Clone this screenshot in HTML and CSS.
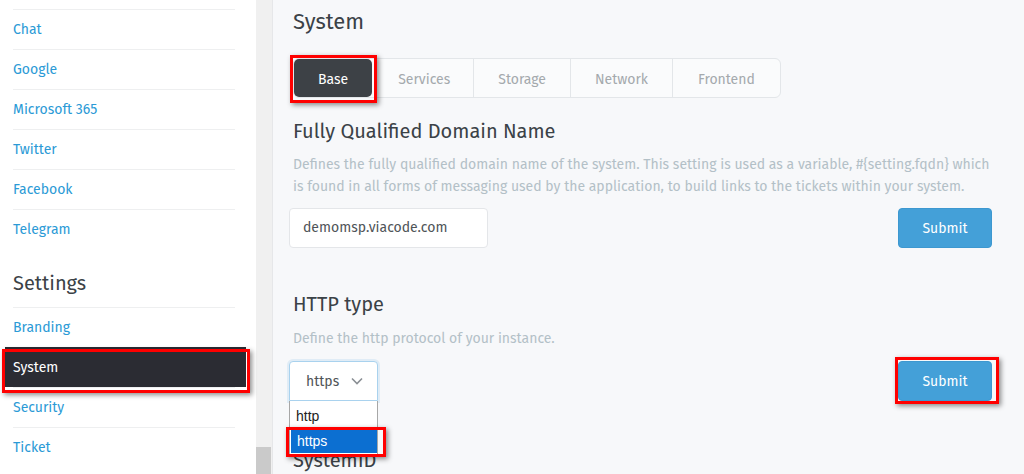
FILE: index.html
```html
<!DOCTYPE html>
<html lang="en">
<head>
<meta charset="utf-8">
<title>System</title>
<link rel="stylesheet" href="styles.css">
</head>
<body>
<div class="app">
  <aside class="sidebar">
    <nav class="nav">
      <a class="nav-item">Chat</a>
      <a class="nav-item">Google</a>
      <a class="nav-item">Microsoft 365</a>
      <a class="nav-item">Twitter</a>
      <a class="nav-item">Facebook</a>
      <a class="nav-item">Telegram</a>
      <h2 class="nav-title">Settings</h2>
      <a class="nav-item">Branding</a>
      <a class="nav-item is-active mark mark-nav">System</a>
      <a class="nav-item">Security</a>
      <a class="nav-item">Ticket</a>
    </nav>
  </aside>
  <div class="scrollbar"><div class="scrollbar-thumb"></div></div>
  <main class="content">
    <h1 class="page-title">System</h1>
    <div class="tabs">
      <span class="tab is-active mark mark-tab">Base</span>
      <span class="tab">Services</span>
      <span class="tab">Storage</span>
      <span class="tab">Network</span>
      <span class="tab">Frontend</span>
    </div>

    <section class="setting setting-fqdn">
      <h2 class="setting-title">Fully Qualified Domain Name</h2>
      <p class="setting-desc">Defines the fully qualified domain name of the system. This setting is used as a variable, #{setting.fqdn} which is found in all forms of messaging used by the application, to build links to the tickets within your system.</p>
      <div class="setting-row">
        <div class="input">demomsp.viacode.com</div>
        <button class="btn">Submit</button>
      </div>
    </section>

    <section class="setting setting-http">
      <h2 class="setting-title">HTTP type</h2>
      <p class="setting-desc">Define the http protocol of your instance.</p>
      <div class="setting-row">
        <div class="select-wrap">
          <div class="select">
            <span>https</span>
            <svg class="chevron" width="12" height="8" viewBox="0 0 12 8"><path d="M1 1.5 L6 6.5 L11 1.5" fill="none" stroke="#8a8f94" stroke-width="1.6"/></svg>
          </div>
          <ul class="dropdown">
            <li class="option">http</li>
            <li class="option is-selected mark mark-option">https</li>
          </ul>
        </div>
        <button class="btn mark mark-btn">Submit</button>
      </div>
    </section>

    <section class="setting setting-last">
      <h2 class="setting-title">SystemID</h2>
    </section>
  </main>
</div>
</body>
</html>
```

FILE: styles.css
```css
* { box-sizing: border-box; }

html, body {
  margin: 0;
  height: 474px;
  overflow: hidden;
}

body {
  font-family: "Fira Sans", "Open Sans", "Noto Sans", sans-serif;
  font-size: 14px;
  color: #3b4247;
}

.app {
  display: flex;
  height: 474px;
}

/* Sidebar */
.sidebar {
  width: 256px;
  flex: none;
  background: #fff;
  padding: 9px 21px 0 13px;
}

.nav {
  display: flex;
  flex-direction: column;
}

.nav-item {
  display: block;
  height: 40px;
  line-height: 39px;
  border-top: 1px solid #eeeff0;
  color: #2b9ad6;
  font-size: 14px;
  position: relative;
}

.nav-item.is-active {
  background: #2b2c33;
  color: #fff;
  border-top-color: transparent;
  margin: 0 -11px 0 -8px;
  padding-left: 8px;
}

.nav-title {
  margin: 0;
  padding: 22px 0 12px;
  font-size: 20px;
  line-height: 24px;
  font-weight: 400;
  color: #3b4247;
}

/* Scrollbar */
.scrollbar {
  width: 17px;
  flex: none;
  background: #f0f0f0;
  border-right: 1px solid #e6e7e9;
  display: flex;
  flex-direction: column;
  justify-content: flex-end;
}

.scrollbar-thumb {
  height: 27px;
  width: 15px;
  background: #cacaca;
}

/* Content */
.content {
  flex: 1;
  background: #f7f8fa;
  padding: 8px 32px 0 20px;
  overflow: hidden;
}

.page-title {
  margin: 0;
  font-size: 22px;
  line-height: 28px;
  font-weight: 400;
  color: #3b4247;
}

.tabs {
  margin-top: 22px;
  display: inline-flex;
  height: 40px;
  border: 1px solid #e3e6e9;
  border-radius: 6px;
  background: #fafbfc;
}

.tab {
  display: flex;
  align-items: center;
  padding: 2px 24px 0;
  color: #a4a9ad;
  font-size: 14px;
  border-left: 1px solid #e3e6e9;
  position: relative;
}

.tab:nth-child(2) { border-left: none; padding: 2px 23px 0; }
.tab:nth-child(5) { padding: 2px 25px 0; }

.tab.is-active {
  background: #3d4146;
  color: #fff;
  border-radius: 5px;
  border-left: none;
  margin: 0 3px 0 0;
}

/* Settings */
.setting-title {
  margin: 19px 0 0;
  font-size: 20px;
  line-height: 28px;
  font-weight: 400;
  color: #3b4247;
}

.setting-http .setting-title { margin-top: 42px; }
.setting-last .setting-title { margin-top: 45px; }

.setting-desc {
  margin: 9px 0 0;
  font-size: 14px;
  line-height: 22px;
  color: #b3c0c7;
}

.setting-http .setting-desc { margin-top: 10px; }

.setting-row {
  margin-top: 10px;
  display: flex;
  justify-content: space-between;
  align-items: flex-start;
}

.setting-http .setting-row { margin-top: 11px; }

.input {
  margin-left: -4px;
  width: 199px;
  height: 40px;
  line-height: 38px;
  padding: 0 13px;
  background: #fff;
  border: 1px solid #e4e6e9;
  border-radius: 4px;
  color: #4f5458;
  font-size: 14px;
}

.btn {
  width: 94px;
  height: 40px;
  background: #44a0d8;
  border: 1px solid #3d98d0;
  border-radius: 4px;
  color: #fff;
  font-family: inherit;
  font-size: 14px;
  font-weight: 400;
  position: relative;
}

/* Select */
.select-wrap {
  margin-left: -4px;
  position: relative;
  z-index: 2;
}

.select {
  width: 89px;
  height: 40px;
  display: flex;
  align-items: center;
  justify-content: space-between;
  padding: 0 14px 0 16px;
  background: #fff;
  border: 1px solid #a9d2ee;
  border-radius: 4px 4px 0 0;
  box-shadow: 0 0 0 2px rgba(120, 185, 230, 0.18);
  color: #4f5458;
  font-size: 14px;
}

.chevron { display: block; }

.dropdown {
  position: absolute;
  top: 40px;
  left: 0;
  width: 89px;
  margin: 0;
  padding: 3px 0 2px;
  list-style: none;
  background: #fff;
  border: 1px solid #a7a7a7;
  border-top: none;
  font-family: "Liberation Sans", Arial, sans-serif;
  font-size: 14px;
  color: #222;
}

.option {
  height: 24px;
  line-height: 24px;
  padding-left: 6px;
  position: relative;
}

.option.is-selected {
  background: #0c6fd1;
  color: #fff;
  margin: 1px 0 0 1px;
}

/* Red annotation frames */
.mark::after {
  content: "";
  position: absolute;
  border: 3px solid #ff0000;
  box-shadow: 2px 2px 5px rgba(0, 0, 0, 0.45);
  pointer-events: none;
}

.mark-nav::after { top: 1px; bottom: -6px; left: -3px; right: -4px; }
.mark-tab::after { top: -4px; bottom: -6px; left: -4px; right: -5px; }
.mark-btn::after { top: -5px; bottom: -4px; left: -4px; right: -8px; }
.mark-option::after { top: -2px; bottom: -4px; left: -5px; right: -9px; }
```
